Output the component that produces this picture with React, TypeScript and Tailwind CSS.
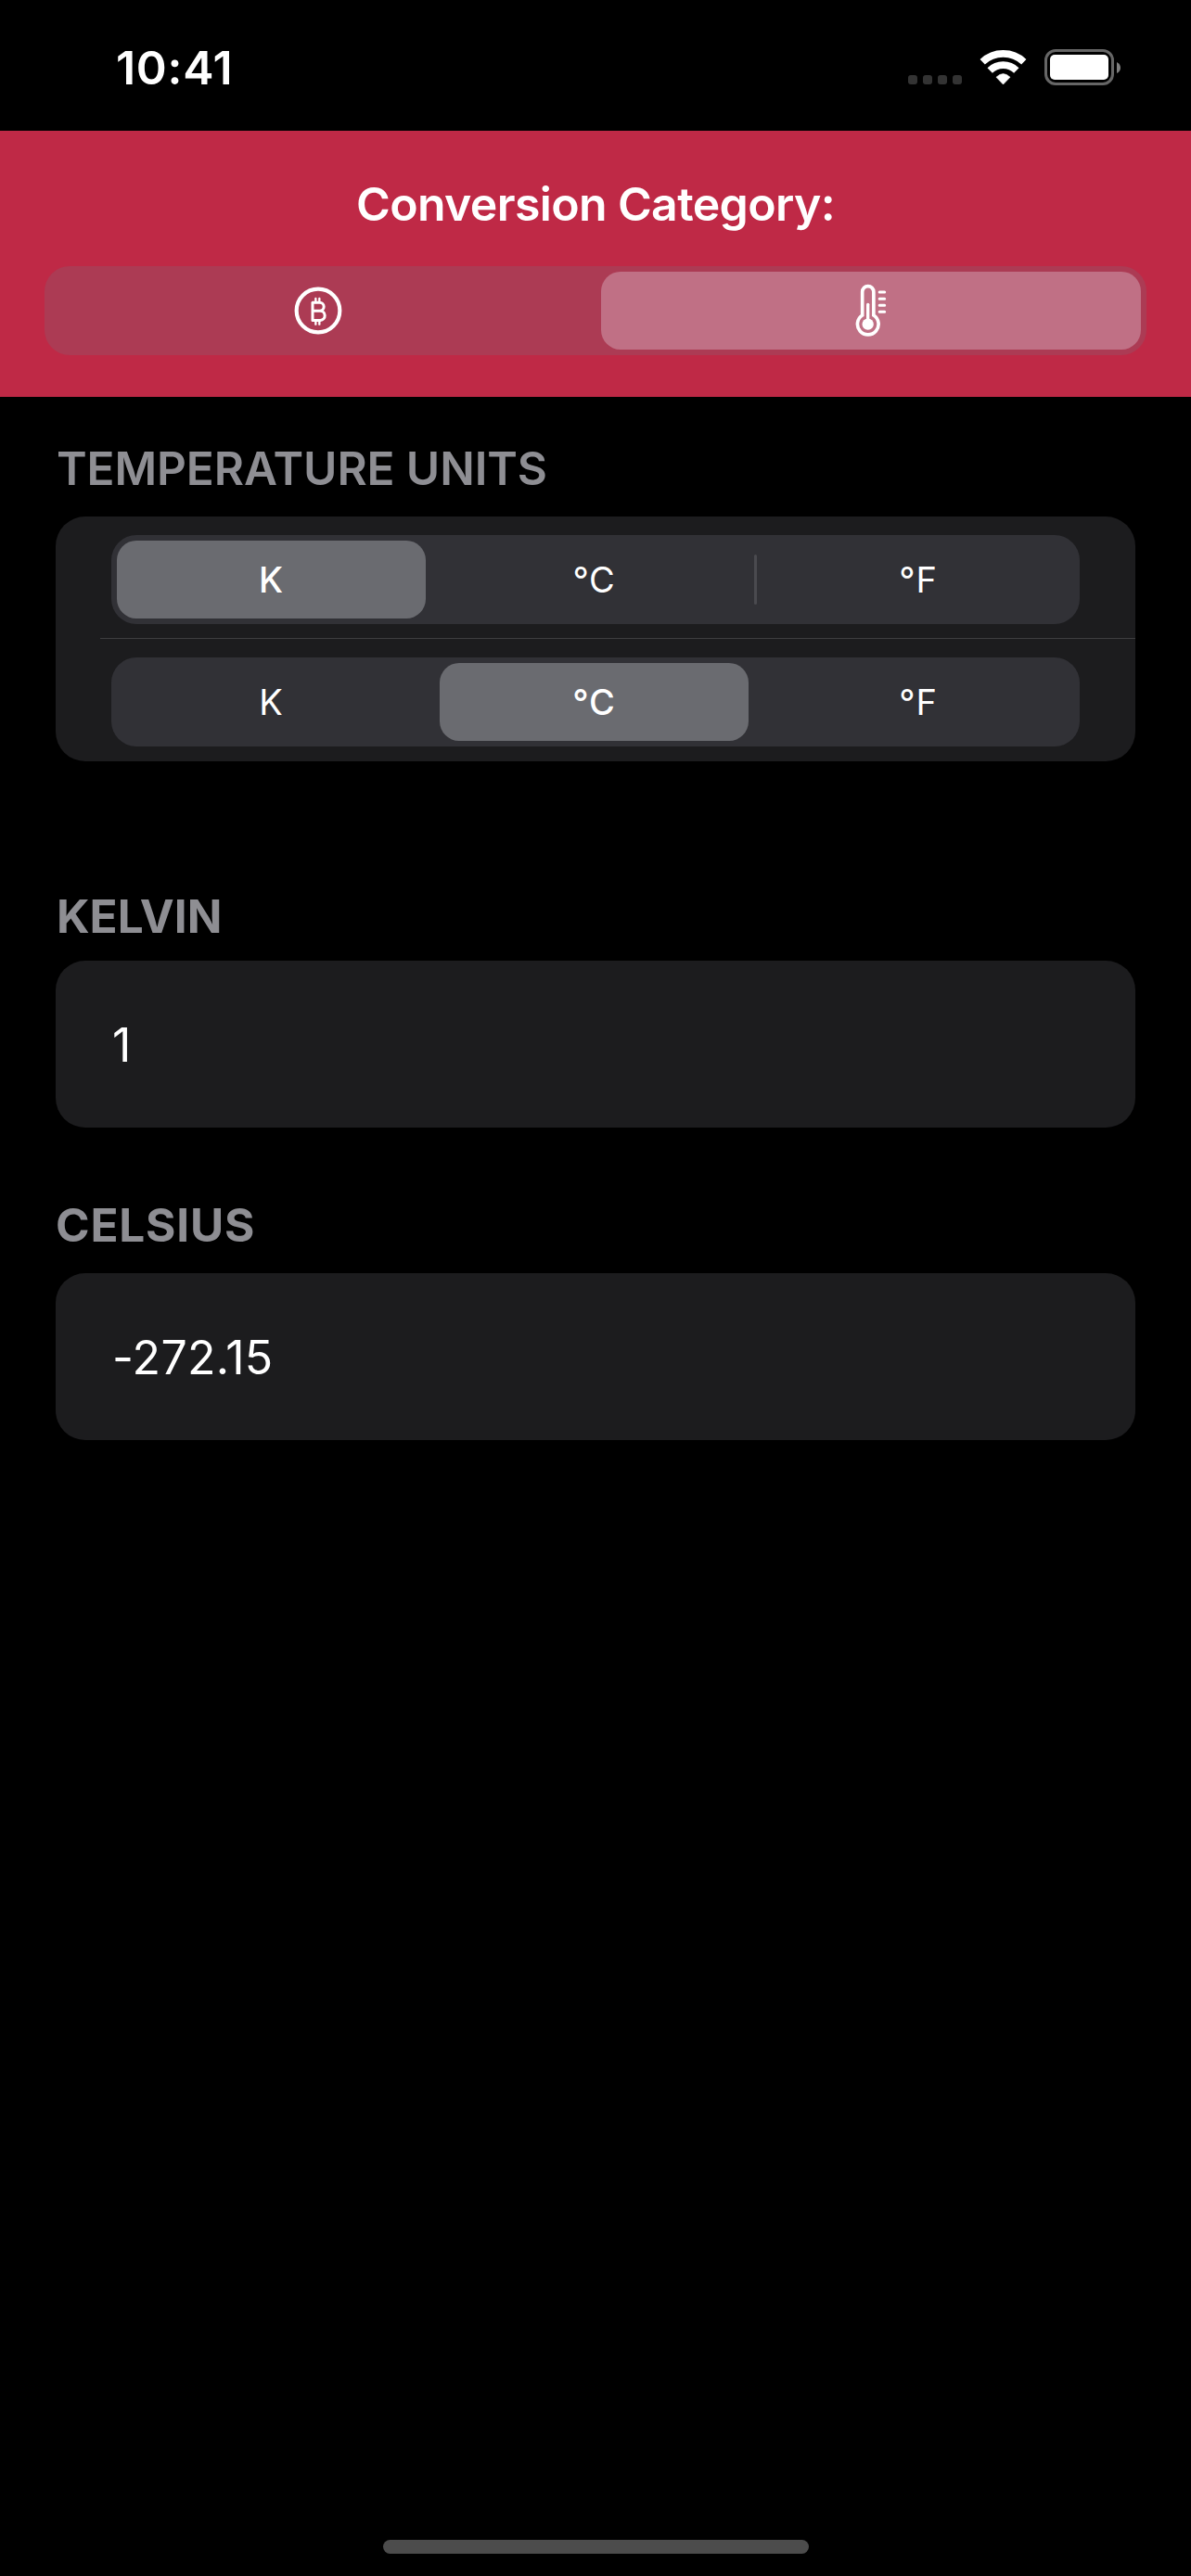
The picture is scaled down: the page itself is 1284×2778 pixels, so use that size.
type Unit = "K" | "°C" | "°F";

const UNITS: Unit[] = ["K", "°C", "°F"];

function StatusBar() {
  return (
    <div className="flex h-[141px] items-start justify-between pl-[125px] pr-[76px]">
      <div className="mt-[43px] text-[50px] leading-[60px] font-semibold tracking-[0.7px]">10:41</div>
      <div className="mt-[53px] flex h-10 items-start">
        <div className="mt-7 flex gap-[6px]">
          {[0, 1, 2, 3].map((i) => (
            <span key={i} className="size-[10px] rounded-[3px] bg-[#333333]" />
          ))}
        </div>
        <svg className="mt-[1px] ml-[19px] h-[37px] w-[51px]" viewBox="0 0 51 37" fill="none">
          <path d="M3.2 12.7A32.6 32.6 0 0 1 47.8 12.7" stroke="white" strokeWidth="7.7" />
          <path d="M11.2 22A20.5 20.5 0 0 1 39.8 22" stroke="white" strokeWidth="7.7" />
          <path d="M25.5 37L18 29.2Q25.5 22 33 29.2Z" fill="white" stroke="white" strokeWidth="0.6" />
        </svg>
        <div className="ml-[19px] flex h-[39px] items-center">
          <div className="h-[39px] w-[75px] rounded-[12px] border-[3px] border-[#666666] p-[3px]">
            <div className="h-full rounded-[5px] bg-white" />
          </div>
          <svg className="ml-[3px] h-3 w-1" viewBox="0 0 4 12">
            <path d="M0 0Q4 2 4 6T0 12Z" fill="#7f7f7f" />
          </svg>
        </div>
      </div>
    </div>
  );
}

function BitcoinIcon() {
  return (
    <svg className="h-[52px] w-[52px]" viewBox="82 88 156 156" fill="none" stroke="white">
      <circle cx="160" cy="166" r="70" strokeWidth="12.5" />
      <path d="M142 139.5V197.5" strokeWidth="9" strokeLinecap="round" />
      <path
        d="M142 139.5H165A13.5 13.5 0 0 1 165 166.5H142M165 166.5A15.5 15.5 0 0 1 167 197.5H142"
        strokeWidth="9"
        strokeLinejoin="round"
      />
      <path d="M152 127V139M164 127V139M152 198V210M164 198V210" strokeWidth="7" strokeLinecap="round" />
    </svg>
  );
}

function ThermometerIcon() {
  return (
    <svg className="h-[58px] w-[34px]" viewBox="97 79 102 174" fill="none" stroke="white" strokeLinecap="round">
      <path d="M120 181V105A18.3 18.3 0 0 1 156.6 105V181A34 34 0 1 1 120 181Z" strokeWidth="11" />
      <path d="M138 146V205" strokeWidth="10" />
      <circle cx="138" cy="210" r="18.5" fill="white" stroke="none" />
      <path d="M175.5 106H192M175.5 127.5H192M175.5 148.5H192M175.5 169.5H192" strokeWidth="9" />
    </svg>
  );
}

function CategoryHeader() {
  return (
    <header className="h-[287px] bg-[#bf2946] px-12 pt-[49px]">
      <h1 className="text-center text-[50px] leading-[60px] font-semibold tracking-[-0.65px]">Conversion Category:</h1>
      <div className="mt-[37px] flex h-24 rounded-[27px] bg-[#ac3b54] py-[6px]">
        <button className="flex flex-1 items-center justify-center pr-[10px]">
          <BitcoinIcon />
        </button>
        <button className="mr-[6px] flex w-[582px] items-center justify-center rounded-[21px] bg-[#c07085]">
          <ThermometerIcon />
        </button>
      </div>
    </header>
  );
}

function UnitPicker({ selected }: { selected: Unit }) {
  return (
    <div className="flex h-24 items-center gap-[6px] rounded-[27px] bg-[#313136] px-[6px] text-[38px] leading-[46px] tracking-[0.8px]">
      {UNITS.map((unit, i) => (
        <div key={unit} className="contents">
          {i > 0 && (
            <span
              className={
                unit !== selected && UNITS[i - 1] !== selected
                  ? "h-[54px] w-[3px] rounded-full bg-[#4a4a4f]"
                  : "w-[3px]"
              }
            />
          )}
          <button
            className={
              unit === selected
                ? "h-[84px] w-[333px] rounded-[21px] bg-[#6a6b70] font-medium"
                : i === UNITS.length - 1
                  ? "h-[84px] flex-1"
                  : "h-[84px] w-[333px]"
            }
          >
            {unit}
          </button>
        </div>
      ))}
    </div>
  );
}

function ValueCard({ value }: { value: string }) {
  return (
    <div className="flex h-[180px] items-center rounded-[32px] bg-[#1c1c1e] px-[61px] pt-[2px] text-[50px] leading-[60px] tracking-[0.3px]">
      {value}
    </div>
  );
}

export default function App() {
  return (
    <div className="flex h-[2778px] w-[1284px] flex-col bg-black font-[Inter,sans-serif] text-white">
      <StatusBar />
      <CategoryHeader />
      <main className="flex flex-1 flex-col px-[60px] text-[49.5px] leading-[60px]">
        <h2 className="mt-[47px] pl-px font-semibold tracking-[-0.1px] text-[#8e8e93]">TEMPERATURE UNITS</h2>
        <section className="mt-[22px] flex h-[264px] flex-col rounded-[32px] bg-[#1c1c1e] pt-5">
          <div className="px-[60px]">
            <UnitPicker selected="K" />
          </div>
          <div className="mt-[15px] mb-5 ml-12 h-px bg-[#3d3d40]" />
          <div className="px-[60px]">
            <UnitPicker selected="°C" />
          </div>
        </section>
        <h2 className="mt-[137px] pl-px font-bold text-[#8e8e93]">KELVIN</h2>
        <section className="mt-[18px]">
          <ValueCard value="1" />
        </section>
        <h2 className="mt-[75px] font-bold tracking-[0.8px] text-[#8e8e93]">CELSIUS</h2>
        <section className="mt-[22px]">
          <ValueCard value="-272.15" />
        </section>
      </main>
      <div className="mb-6 ml-[413px] h-[15px] w-[459px] rounded-full bg-[#4c4c4c]" />
    </div>
  );
}
